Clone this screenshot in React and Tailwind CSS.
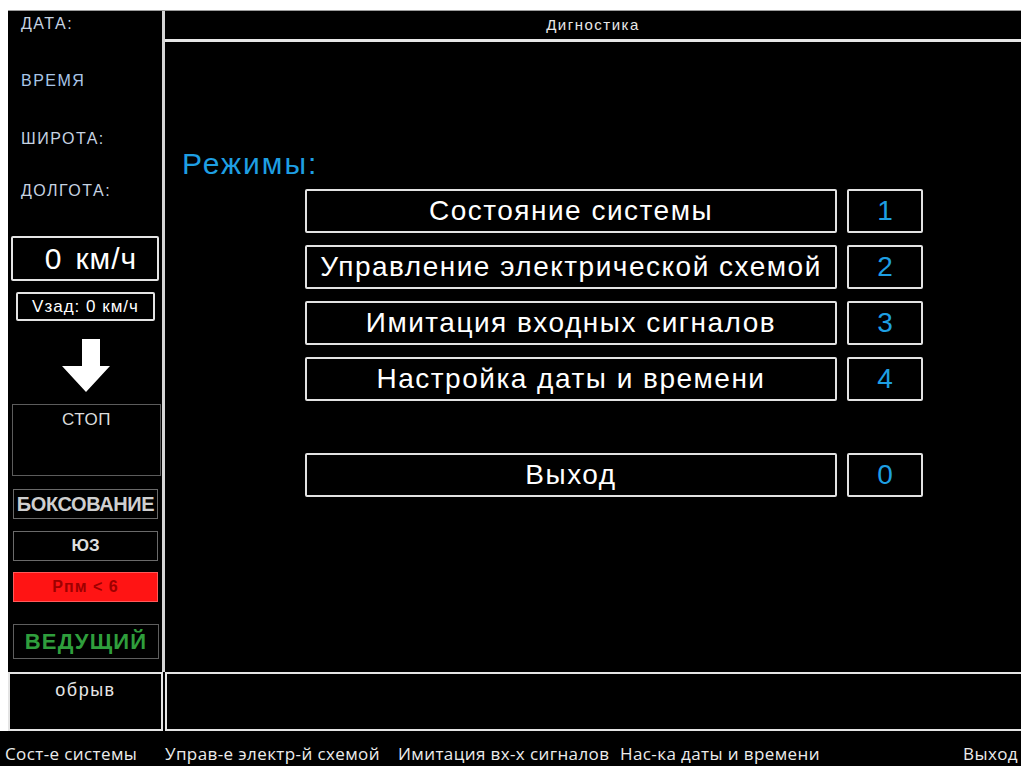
import React from "react";

const modes = [
  { label: "Состояние системы", key: "1" },
  { label: "Управление электрической схемой", key: "2" },
  { label: "Имитация входных сигналов", key: "3" },
  { label: "Настройка даты и времени", key: "4" },
];

const softKeys = [
  { label: "Сост-е системы", cls: "w-[165px] pl-[5px]" },
  { label: "Управ-е электр-й схемой", cls: "w-[233px]" },
  { label: "Имитация вх-х сигналов", cls: "w-[222px]" },
  { label: "Нас-ка даты и времени", cls: "flex-1" },
  { label: "Выход", cls: "pr-[3px]" },
];

const ModeRow = ({ label, num, className = "" }) => (
  <div className={`flex gap-[10px] h-[44px] ${className}`}>
    <div className="w-[532px] flex items-center justify-center border-2 border-[#e2e2e2] rounded-[2px] text-[28px] tracking-[1.5px] text-white">
      {label}
    </div>
    <div className="w-[76px] flex items-center justify-center border-2 border-[#e2e2e2] rounded-[2px] text-[28px] text-[#1e9fe3]">
      {num}
    </div>
  </div>
);

const Label = ({ children, className = "" }) => (
  <div className={`pl-[13px] h-[16px] text-[16px] leading-none tracking-[1.5px] ${className}`}>{children}</div>
);

export default function App() {
  return (
    <div className="w-[1021px] h-[766px] bg-white overflow-hidden flex flex-col font-['Liberation_Sans',Arial,sans-serif]">
      <div className="h-[731px] pl-[8px] pt-[10px] flex flex-col">
        <div className="h-[662px] bg-black flex border-t border-[#9c9c9c]">
          {/* left status column */}
          <aside className="w-[157px] border-r-[3px] border-[#d6d6d6] flex flex-col">
            <Label className="mt-[5px] text-[#c6d3e2]">ДАТА:</Label>
            <Label className="mt-[41px] text-[#a9c6e8]">ВРЕМЯ</Label>
            <Label className="mt-[42px] text-[#c6d3e2]">ШИРОТА:</Label>
            <Label className="mt-[36px] text-[#c6d3e2]">ДОЛГОТА:</Label>

            <div className="mt-[37px] ml-[3px] w-[148px] h-[45px] border-2 border-[#e4e4e4] rounded-[2px] flex items-center justify-center gap-[14px] pl-[12px] text-[30px] leading-none text-white">
              <span>0</span>
              <span className="tracking-[1px]">км/ч</span>
            </div>

            <div className="mt-[11px] ml-[8px] w-[139px] h-[29px] border-2 border-[#e4e4e4] rounded-[2px] flex items-center justify-center text-[17px] tracking-[1px] text-white">
              Vзад: 0 км/ч
            </div>

            <svg className="mt-[18px] ml-[54px]" width="48" height="53" viewBox="0 0 48 53">
              <polygon points="20,0 38,0 38,27 48,27 24,53 0,27 20,27" fill="#ffffff" />
            </svg>

            <div className="mt-[12px] ml-[4px] w-[149px] h-[72px] border border-[#5c5c5c] flex justify-center pt-[6px] text-[17px] leading-none tracking-[0.5px] text-[#dcdcdc]">
              СТОП
            </div>

            <div className="mt-[13px] ml-[5px] w-[145px] h-[30px] border border-[#6a6a6a] flex items-center justify-center text-[20px] font-bold tracking-[-0.4px] text-[#cfcfcf]">
              БОКСОВАНИЕ
            </div>

            <div className="mt-[12px] ml-[5px] w-[145px] h-[30px] border border-[#6a6a6a] flex items-center justify-center text-[17px] font-bold text-[#dedede]">
              ЮЗ
            </div>

            <div className="mt-[11px] ml-[5px] w-[145px] h-[30px] bg-[#ff1414] border border-[#ff5a5a] flex items-center justify-center text-[16px] font-bold tracking-[1px] text-[#9e0000]">
              Pпм &lt; 6
            </div>

            <div className="mt-[22px] ml-[5px] w-[146px] h-[35px] border border-[#5e5e5e] flex items-center justify-center text-[22px] font-bold tracking-[1.2px] text-[#2f9e3c]">
              ВЕДУЩИЙ
            </div>
          </aside>

          {/* diagnostics screen */}
          <section className="flex-1 flex flex-col">
            <header className="h-[31px] border-b-[3px] border-[#e6e6e6] flex items-center justify-center text-[15px] tracking-[1.5px] text-[#e8e8e8]">
              Дигностика
            </header>
            <main className="flex-1 flex flex-col pl-[17px]">
              <div className="mt-[107px] text-[30px] leading-none tracking-[2px] text-[#1e9fe3]">Режимы:</div>
              <div className="mt-[10px] pl-[123px] flex flex-col gap-[12px]">
                {modes.map((m) => (
                  <ModeRow key={m.key} label={m.label} num={m.key} />
                ))}
                <ModeRow label="Выход" num="0" className="mt-[40px]" />
              </div>
            </main>
          </section>
        </div>

        {/* message line */}
        <div className="flex-1 flex bg-black">
          <div className="w-[155px] border-2 border-[#e4e4e4] flex justify-center pt-[7px] text-[18px] leading-none tracking-[1.5px] text-[#e6e6e6]">
            обрыв
          </div>
          <div className="flex-1 ml-[2px] border-y-2 border-l-2 border-[#e4e4e4]" />
        </div>
      </div>

      {/* soft key captions */}
      <footer className="flex-1 bg-black flex items-end pb-[4px] font-['Open_Sans',sans-serif] text-[17px] leading-none tracking-[0.4px] text-[#ececec] whitespace-nowrap">
        {softKeys.map((k) => (
          <span key={k.label} className={`shrink-0 ${k.cls}`}>
            {k.label}
          </span>
        ))}
      </footer>
    </div>
  );
}
